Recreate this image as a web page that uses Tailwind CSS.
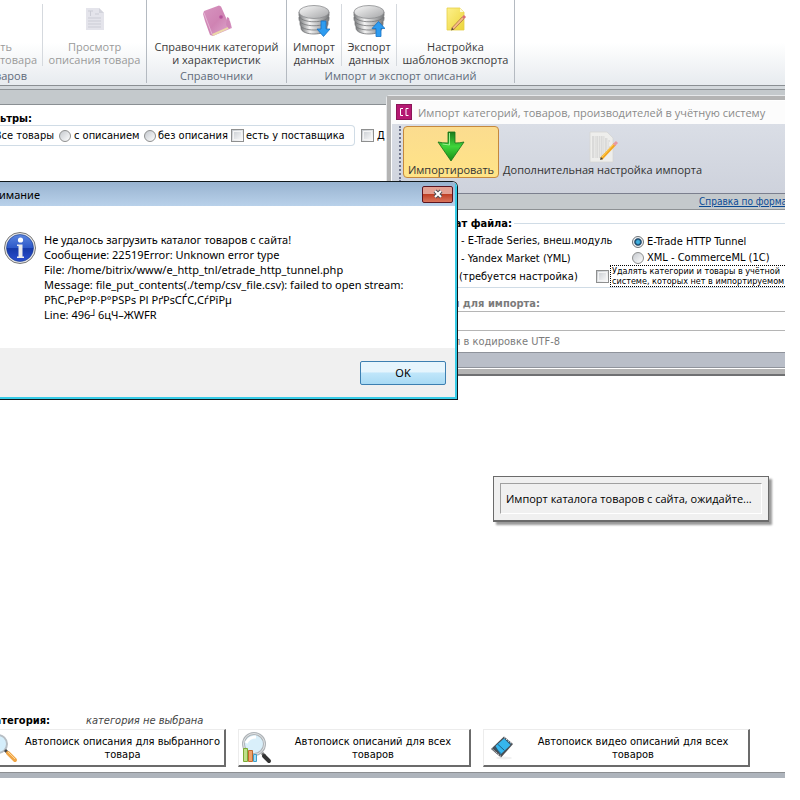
<!DOCTYPE html>
<html lang="ru">
<head>
    <meta charset="UTF-8">
    <meta name="viewport" content="width=device-width, initial-scale=1.0">
    <title>Импорт каталога товаров</title>
    <script src="https://cdn.jsdelivr.net/npm/@tailwindcss/browser@4"></script>
</head>
<body class="bg-white text-black">

<div class="min-h-screen pr-[15px] pb-[22px] flex flex-col">
<div class="relative flex-1 flex flex-col overflow-hidden text-[11px] leading-[13px] font-['DejaVu_Sans_Condensed','DejaVu_Sans',sans-serif]">

    <!-- Лента -->
    <header class="h-[85px] flex bg-linear-to-b from-white from-50% to-[#e7ebef] font-['Open_Sans','Noto_Sans',sans-serif] text-[#3b3b3b]">
        <!-- Описания товаров -->
        <section class="w-[147px] h-[83px] flex flex-col border-r border-[#b4bac1]">
            <div class="flex h-[69px]">
                <div class="w-[43px] h-[62px] mt-1 border-r border-[#d5d9de] flex flex-col items-end justify-end text-[#9a9a9a] whitespace-nowrap">
                    <span class="pr-[30px]">ть</span>
                    <span class="pr-[5px]">товара</span>
                </div>
                <button disabled class="flex-1 flex flex-col items-center pt-[5px] text-[#9a9a9a]">
                    <svg class="w-8 h-8" viewBox="0 0 32 32">
                        <path d="M7 3h13l5 5v17H7z" fill="#e4e4eb"/>
                        <path d="M20 3v5h5z" fill="#d3d4dc"/>
                        <path d="M9 6h5M11.500 6v5M16 9h4M9 13h13M9 16h13M9 19h13M9 22h13" stroke="#cbccd5" fill="none"/>
                    </svg>
                    <span class="mt-[3px]">Просмотр</span>
                    <span>описания товара</span>
                </button>
            </div>
            <div class="text-[#5f6b7a]"><span class="w-[27px] flex justify-end">варов</span></div>
        </section>

        <!-- Справочники -->
        <section class="w-[140px] h-[83px] flex flex-col border-r border-[#b4bac1]">
            <button class="h-[69px] flex flex-col items-center pt-[5px]">
                <svg class="w-8 h-8" viewBox="0 0 32 32">
                    <defs><linearGradient id="book" x1="0" x2="1" y1="0" y2="1"><stop stop-color="#d795c0"/><stop offset=".5" stop-color="#cf83b3"/><stop offset="1" stop-color="#e0aed2"/></linearGradient></defs>
                    <path d="M2 9L3 6L18 0.500L20 1.500L26 15L29 16L31 23L12 31L9 30L4 16z" fill="url(#book)"/>
                    <path d="M11 29L27 22L28 23.500L12 31z" fill="#ecd9a8"/>
                    <path d="M26 12L28 13L30 22L28 24L25 20z" fill="#cf86b6"/>
                    <circle cx="20" cy="12" r="1.800" fill="#b5529b"/>
                    <path d="M3 8L11 29" stroke="#e5b5d4" fill="none"/>
                </svg>
                <span class="mt-[3px]">Справочник категорий</span>
                <span>и характеристик</span>
            </button>
            <div class="text-center text-[#5f6b7a]">Справочники</div>
        </section>

        <!-- Импорт и экспорт описаний -->
        <section class="w-[228px] h-[83px] flex flex-col border-r border-[#b4bac1]">
            <div class="flex h-[69px]">
                <button class="w-[55px] h-[62px] mt-1 border-r border-[#d5d9de] flex flex-col items-center">
                    <svg class="w-8 h-8 mt-px" viewBox="0 0 32 32">
                        <defs>
                            <linearGradient id="disk" x1="0" x2="1"><stop stop-color="#77797b"/><stop offset=".35" stop-color="#f4f4f4"/><stop offset="1" stop-color="#77797b"/></linearGradient>
                            <linearGradient id="disktop" x1="0" x2="1" y1="0" y2="1"><stop stop-color="#fafafa"/><stop offset="1" stop-color="#a4a5a7"/></linearGradient>
                            <g id="database">
                                <path d="M3 21v2c0 8 26 8 26 0v-2z" fill="url(#disk)" stroke="#737577" stroke-width=".8"/>
                                <path d="M2 17v2c0 8 28 8 28 0v-2z" fill="url(#disk)" stroke="#737577" stroke-width=".8"/>
                                <path d="M1 12v2c0 9 30 9 30 0v-2z" fill="url(#disk)" stroke="#737577" stroke-width=".8"/>
                                <path d="M1 7v3c0 9 30 9 30 0v-3z" fill="url(#disk)" stroke="#737577" stroke-width=".8"/>
                                <ellipse cx="16" cy="7" rx="15" ry="6.500" fill="url(#disktop)" stroke="#8b8d8f" stroke-width=".8"/>
                            </g>
                        </defs>
                        <use href="#database"/>
                        <path d="M23 16h5v8h4L25.500 31.500L19 24h4z" fill="#2e9cf0" stroke="#1672c4" stroke-width=".8"/>
                    </svg>
                    <span class="mt-[3px]">Импорт</span>
                    <span>данных</span>
                </button>
                <button class="w-[55px] h-[62px] mt-1 border-r border-[#d5d9de] flex flex-col items-center">
                    <svg class="w-8 h-8 mt-px" viewBox="0 0 32 32">
                        <use href="#database"/>
                        <path d="M23 31.500h5v-8h4L25.500 16.500L19 23.500h4z" fill="#2e9cf0" stroke="#1672c4" stroke-width=".8"/>
                    </svg>
                    <span class="mt-[3px]">Экспорт</span>
                    <span>данных</span>
                </button>
                <button class="flex-1 flex flex-col items-center pt-[5px]">
                    <svg class="w-8 h-8" viewBox="0 0 32 32">
                        <defs><linearGradient id="note" x1="0" x2="1" y1="0" y2="1"><stop stop-color="#fdf08a"/><stop offset="1" stop-color="#ecd53a"/></linearGradient></defs>
                        <path d="M7 3h13l4 4v18H7z" fill="url(#note)" stroke="#e6cf4a" stroke-width=".8"/>
                        <path d="M20 3l4 4h-4z" fill="#fdf9d4"/>
                        <path d="M12.500 24L23 13" stroke="#9a5a3a" stroke-width="3"/>
                        <path d="M12.500 24L23 13" stroke="#f6bd84" stroke-width="2"/>
                        <path d="M23 13L25 11" stroke="#d9707a" stroke-width="3"/>
                        <path d="M11 25.500l1-3 2 2z" fill="#5b4a3a"/>
                    </svg>
                    <span class="mt-[3px]">Настройка</span>
                    <span>шаблонов экспорта</span>
                </button>
            </div>
            <div class="text-center text-[#5f6b7a]">Импорт и экспорт описаний</div>
        </section>
    </header>
    <div class="h-5 border-y border-[#8a8f93] bg-[#c4c9cc]">
        <div class="h-1 bg-[#d3d8dc] border-b border-[#8f9498]"></div>
    </div>

    <!-- Фильтры -->
    <main class="flex-1 flex flex-col">
        <fieldset class="w-[355px] mt-[7px]">
            <legend class="w-[32px] h-[13px] flex justify-end whitespace-nowrap font-bold">Фильтры:</legend>
            <div class="h-[21px] border border-l-0 border-[#d0dce6] rounded-r flex items-center whitespace-nowrap">
                <input type="radio" name="filter" id="all" class="sr-only">
                <label for="all" class="w-[54px] flex justify-end">Все товары</label>
                <input type="radio" name="filter" id="with" class="appearance-none shrink-0 w-3 h-3 ml-[5px] rounded-full border border-[#8e8f8f] bg-linear-to-br from-[#c5c9ce] to-white">
                <label for="with" class="w-[70px] pl-[3px]">с описанием</label>
                <input type="radio" name="filter" id="without" class="appearance-none shrink-0 w-3 h-3 ml-[3px] rounded-full border border-[#8e8f8f] bg-linear-to-br from-[#c5c9ce] to-white">
                <label for="without" class="w-[72px] pl-[2px]">без описания</label>
                <input type="checkbox" id="vendor" class="appearance-none shrink-0 w-[13px] h-[13px] ml-[3px] border border-[#8e8f8f] bg-linear-to-br from-[#c5c9ce] to-white outline outline-offset-[-3px] outline-[#f4f4f4]">
                <label for="vendor" class="pl-[2px]">есть у поставщика</label>
            </div>
        </fieldset>
        <div class="absolute left-[361px] top-[129px] flex items-center">
            <input type="checkbox" id="extra" class="appearance-none w-[13px] h-[13px] border border-[#8e8f8f] bg-linear-to-br from-[#c5c9ce] to-white outline outline-offset-[-3px] outline-[#f4f4f4]">
            <label for="extra" class="pl-[3px]">Д</label>
        </div>

        <div class="flex-1"></div>

        <!-- Категория и автопоиск -->
        <div class="flex items-center whitespace-nowrap mb-[2px]">
            <b class="w-[50px] flex justify-end">Категория:</b>
            <i class="ml-9 text-[#444]">категория не выбрана</i>
        </div>
        <div class="flex gap-3 mb-[5px]">
            <button class="w-[226px] h-[38px] flex items-center border-t border-t-[#ececec] border-b-2 border-r-2 border-[#6b6b6b]">
                <svg class="w-[19px] h-8 shrink-0" viewBox="13 0 19 32">
                    <circle cx="11" cy="12" r="9" fill="#d5eefb" stroke="#b7bec4" stroke-width="2"/>
                    <path d="M18 18l3 3" stroke="#444" stroke-width="3"/>
                    <path d="M21 21L28 28" stroke="#f0a545" stroke-width="4" stroke-linecap="round"/>
                    <path d="M21 20l7 7" stroke="#fbd79a" stroke-width="1"/>
                </svg>
                <span class="flex-1 pl-[2px]">Автопоиск описания для выбранного<br>товара</span>
            </button>
            <button class="w-[233px] h-[38px] flex items-center pl-[2px] border-t border-l border-t-[#ececec] border-l-[#ececec] border-b-2 border-r-2 border-[#6b6b6b]">
                <svg class="w-8 h-8 shrink-0" viewBox="0 0 32 32">
                    <path d="M21 21l3 3" stroke="#777" stroke-width="3"/>
                    <path d="M23 24L28 29" stroke="#333" stroke-width="4" stroke-linecap="round"/>
                    <circle cx="13" cy="12" r="10.500" fill="#d9effa" stroke="#aeb3b7" stroke-width="3"/>
                    <circle cx="13" cy="12" r="10.500" fill="none" stroke="#e3e6e8" stroke-width="1"/>
                    <path d="M5 11q3-6 10-6" stroke="#fff" stroke-width="3" fill="none"/>
                    <path d="M2.500 16.500h4v13h-4z" fill="#bfe08a" stroke="#7cab35"/>
                    <path d="M7.500 18.500h4v11h-4z" fill="#efa36b" stroke="#c26a2e"/>
                    <path d="M12.500 22.500h3v7h-3z" fill="#a4dcf5" stroke="#3e9fc9"/>
                </svg>
                <span class="flex-1 pl-1">Автопоиск описаний для всех<br>товаров</span>
            </button>
            <button class="w-[267px] h-[38px] flex items-center pl-[2px] border-t border-l border-t-[#ececec] border-l-[#ececec] border-b-2 border-r-2 border-[#6b6b6b]">
                <svg class="w-8 h-8 shrink-0" viewBox="0 0 32 32">
                    <ellipse cx="18" cy="26" rx="8" ry="1.500" fill="#efefef"/>
                    <path d="M5 17L18 4.500L27 12L15 25.500z" fill="#4a4e54"/>
                    <path d="M9.500 14L18 6.500L24.500 13L14.500 22.500z" fill="#35b6ee"/>
                    <path d="M8.500 15.500L15.500 22M18.500 6.500L25 12M11.500 12L18.500 18.500" stroke="#1b5f86" stroke-width="1"/>
                    <path d="M6.500 17L15 24.500M18 5.500L26 12" stroke="#d8dadc" stroke-width="1" stroke-dasharray="1.500 1"/>
                </svg>
                <span class="flex-1">Автопоиск видео описаний для всех<br>товаров</span>
            </button>
        </div>
        <div class="h-[6px] border-t border-[#8c8f92] bg-[#aeb4bc]"></div>
    </main>

    <!-- Окно импорта -->
    <section class="absolute left-[386px] right-0 top-[95px] border-t border-l border-[#e6e8ea] rounded-tl-sm bg-white">
        <div class="border-t-4 border-l-4 border-[#b4b4b4] pl-px pt-px">
            <div class="h-[23px] flex items-center pl-1 pb-px bg-[#fcfcfc] font-['Open_Sans','Noto_Sans',sans-serif] text-[#8b8b8b] whitespace-nowrap">
                <svg class="w-4 h-4 shrink-0" viewBox="0 0 16 16">
                    <rect width="16" height="16" fill="#8c1558"/>
                    <rect x="1" y="1" width="14" height="14" fill="#b51872"/>
                    <path d="M7 4.500H4.500V11.500H7M12.500 4.500H10V11.500H12.500" stroke="#fff" fill="none"/>
                </svg>
                <h2 class="pl-[6px]">Импорт категорий, товаров, производителей в учётную систему</h2>
            </div>
            <div class="h-[70px] flex pl-[7px] pt-[2px] border-b border-[#7b7f8e] bg-linear-to-b from-[#dadee6] to-[#ced2dc] font-['Open_Sans','Noto_Sans',sans-serif] text-[#333]">
                <div class="w-[2px] h-[56px] mr-[2px] border-l-2 border-dotted border-[#6f748c]"></div>
                <button class="w-[96px] h-[52px] pb-px flex flex-col items-center justify-end border border-[#c5883d] rounded-sm bg-linear-to-b from-[#fbdc8f] to-[#ffe487]">
                    <svg class="w-8 h-8" viewBox="0 0 32 32">
                        <defs><linearGradient id="green" x1="0" x2="0" y1="0" y2="1"><stop stop-color="#1c7a1c"/><stop offset=".5" stop-color="#3fd43a"/><stop offset="1" stop-color="#178c17"/></linearGradient></defs>
                        <path d="M13 1h7v11q5 0 9-1L16 30L3 11q4 1 10 1z" fill="url(#green)" stroke="#17711b" stroke-width=".8"/>
                        <path d="M14.500 2v12l-7-1" stroke="#9df08f" fill="none"/>
                    </svg>
                    <span>Импортировать</span>
                </button>
                <button class="ml-1 h-[52px] pb-[2px] flex flex-col items-center justify-end whitespace-nowrap">
                    <svg class="w-8 h-8" viewBox="0 0 32 32">
                        <path d="M3 1h17l6 6v24H3z" fill="#eeeeec" stroke="#d6d6d4" stroke-width=".8"/>
                        <path d="M5 6h13M5 8h16M5 10h18M5 12h17M5 14h17M5 16h18M5 18h16M5 20h14M5 22h12M5 24h11M5 26h10" stroke="#c6c6c6" stroke-dasharray="2 .7 1 .6"/>
                        <path d="M14 28L28 13" stroke="#f3a51e" stroke-width="3"/>
                        <path d="M13.500 27.500L27 13" stroke="#ffd65a" stroke-width="1"/>
                        <path d="M27 14L30 11" stroke="#e89aa0" stroke-width="3"/>
                        <path d="M13 29l1-3 2 2z" fill="#444"/>
                    </svg>
                    <span>Дополнительная настройка импорта</span>
                </button>
            </div>
            <div class="h-4 border-b border-[#8d9194] bg-[#c4c9cc] pl-[307px] pt-px whitespace-nowrap overflow-hidden">
                <a href="#" class="block text-[10px] text-[#0b4a94] underline">Справка по формат</a>
            </div>

            <fieldset class="h-[78px]">
                <legend class="w-full h-[26px] flex items-center whitespace-nowrap font-bold">
                    <span class="w-[120px] flex justify-end mr-[2px]">Формат файла:</span>
                    <span class="flex-1 h-px bg-[#d0dce6]"></span>
                </legend>
                <div class="h-[52px] flex border-b border-[#d0dce6] whitespace-nowrap">
                    <div class="w-[204px] pl-[67px] flex flex-col leading-[18px] -mt-1">
                        <span class="pl-[2px]">- E-Trade Series, внеш.модуль</span>
                        <span class="pl-[2px]">- Yandex Market (YML)</span>
                        <span>(требуется настройка)</span>
                    </div>
                    <div class="flex-1 min-w-0 leading-4 -mt-[2px]">
                        <div class="flex items-center pl-9">
                            <input type="radio" name="format" id="tunnel" checked class="appearance-none w-3 h-3 rounded-full border border-[#6e7377] bg-radial from-[#3fb0e0] from-20% via-[#12395a] via-45% to-[#eef1f3] to-60%">
                            <label for="tunnel" class="pl-[3px]">E-Trade HTTP Tunnel</label>
                        </div>
                        <div class="flex items-center pl-9">
                            <input type="radio" name="format" id="xml" class="appearance-none w-3 h-3 rounded-full border border-[#8e8f8f] bg-linear-to-br from-[#c5c9ce] to-white">
                            <label for="xml" class="pl-[3px]">XML - CommerceML (1С)</label>
                        </div>
                        <div class="flex items-center -mt-px">
                            <input type="checkbox" id="remove" class="appearance-none shrink-0 w-[13px] h-[13px] border border-[#8e8f8f] bg-linear-to-br from-[#c5c9ce] to-white outline outline-offset-[-3px] outline-[#f4f4f4]">
                            <label for="remove" class="flex-1 ml-px border border-r-0 border-dotted border-black pl-px text-[9px] leading-[10px]">Удалять категории и товары в учётной<br>системе, которых нет в импортируемом</label>
                        </div>
                    </div>
                </div>
            </fieldset>

            <div class="h-16 text-[#7b7b7b] whitespace-nowrap">
                <label for="path" class="w-[148px] h-[23px] flex items-end pb-px justify-end font-bold">Файл для импорта:</label>
                <input type="text" id="path" class="block w-full h-5 border-y border-[#b5b5b5]">
                <div class="w-[168px] h-[21px] flex items-center justify-end">файл в кодировке UTF-8</div>
            </div>
            <div class="h-4 border-y border-[#8f939b] bg-[#b9bec8]"></div>
        </div>
        <div class="h-2 border-t border-t-white border-b-2 border-b-[#6f7072] bg-[#b4b4b4]"></div>
    </section>

    <!-- Сообщение об ошибке -->
    <section role="alertdialog" aria-labelledby="alert-title" class="absolute left-0 top-[181px] w-[458px] border-t border-r border-b border-[#10181c] rounded-tr-md overflow-hidden font-['Noto_Sans','Open_Sans',sans-serif]">
        <div class="border-r-2 border-b-2 border-[#35cbe6] bg-white">
            <div class="h-6 flex items-center justify-between bg-linear-to-b from-[#98b3d0] to-[#b9d1ea]">
                <h2 id="alert-title" class="w-10 flex justify-end">Внимание</h2>
                <button aria-label="Закрыть" class="w-[31px] h-[17px] mr-[2px] flex items-center justify-center rounded-xs border border-[#5a1420] bg-linear-to-b from-[#e3a093] from-45% via-[#bf3f25] via-50% to-[#d9745c]">
                    <svg class="w-3 h-[10px]" viewBox="0 0 12 10">
                        <path d="M3 2L9 8M9 2L3 8" stroke="#4d4f55" stroke-width="4"/>
                        <path d="M3 2L9 8M9 2L3 8" stroke="#fff" stroke-width="2"/>
                    </svg>
                </button>
            </div>
            <div class="h-[142px] flex pt-[26px] pl-1">
                <svg class="w-8 h-8 shrink-0" viewBox="0 0 32 32">
                    <defs><linearGradient id="info" x1="0" x2="0" y1="0" y2="1"><stop stop-color="#5b86e0"/><stop offset=".5" stop-color="#2d58c8"/><stop offset=".52" stop-color="#1639a8"/><stop offset="1" stop-color="#2a4fd0"/></linearGradient></defs>
                    <circle cx="16" cy="16" r="15.500" fill="#e8e8e8" stroke="#777" stroke-width="1"/>
                    <circle cx="16" cy="16" r="13.500" fill="url(#info)" stroke="#173a8c" stroke-width=".6"/>
                    <circle cx="16.500" cy="8" r="2.600" fill="#fff"/>
                    <path d="M13 12.500h5.500v12h1.500v1.500h-7v-1.500h1.500v-10.500h-1.500z" fill="#ececec"/>
                </svg>
                <p class="pl-2 leading-[15px] whitespace-nowrap">
                    Не удалось загрузить каталог товаров с сайта!<br>
                    Сообщение: 22519Error: Unknown error type<br>
                    File: /home/bitrix/www/e_http_tnl/etrade_http_tunnel.php<br>
                    Message: file_put_contents(./temp/csv_file.csv): failed to open stream:<br>
                    РћС‚РєР°Р·Р°РЅРѕ РІ РґРѕСЃС‚СѓРїРµ<br>
                    Line: 496┘6цЧ–ЖWFR
                </p>
            </div>
            <div class="h-[49px] flex items-center justify-end pr-[9px] bg-[#f0f0f0]">
                <button class="w-[86px] h-6 rounded-xs border border-[#3c7fb1] bg-linear-to-b from-[#e6f5fd] from-45% via-[#c0e6fa] via-50% to-[#a9daf4]">OK</button>
            </div>
        </div>
    </section>

    <!-- Ожидание импорта -->
    <div role="status" class="absolute left-[493px] top-[476px] w-[276px] border border-b-2 border-[#6b6b6b] bg-[#f0f0f0] p-[6px] shadow-[3px_3px_2px_#0006] font-['Open_Sans','Noto_Sans',sans-serif]">
        <div class="h-[31px] flex items-center pl-[5px] border border-t-[#a0a0a0] border-l-[#a0a0a0] border-b-white border-r-white whitespace-nowrap">Импорт каталога товаров с сайта, ожидайте...</div>
    </div>
</div>
</div>

</body>
</html>
